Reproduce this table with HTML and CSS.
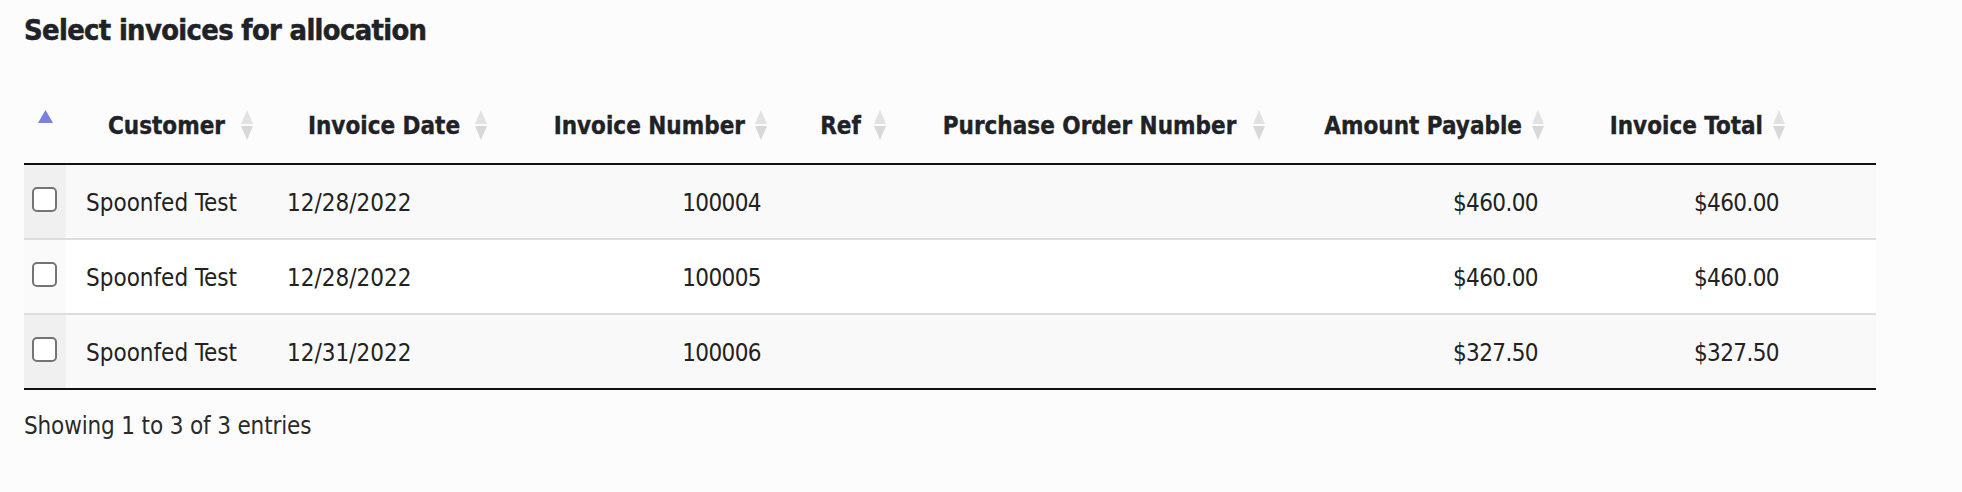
FILE: index.html
```html
<!DOCTYPE html>
<html lang="en">
<head>
  <meta charset="UTF-8">
  <meta name="viewport" content="width=device-width, initial-scale=1.0">
  <title>Select invoices for allocation</title>
  <link rel="stylesheet" href="styles.css">
</head>
<body>
  <div class="page">
    <h1 class="title">Select invoices for allocation</h1>

    <table class="invoices">
      <colgroup>
        <col class="w-check">
        <col class="w-customer">
        <col class="w-date">
        <col class="w-number">
        <col class="w-ref">
        <col class="w-po">
        <col class="w-payable">
        <col class="w-total">
        <col class="w-blank">
      </colgroup>
      <thead>
        <tr>
          <th class="col-check">
            <svg class="sort-asc" width="15" height="13" viewBox="0 0 15 13"><path d="M7.5 0L15 13H0z" fill="#7b80dc"/></svg>
          </th>
          <th>
            <div class="th-inner"><span class="label">Customer</span><span class="sort"><svg width="12" height="30" viewBox="0 0 12 30"><path d="M6 0L12 14H0z" fill="#e2e2e2"/><path d="M0 16H12L6 30z" fill="#d8d8d8"/></svg></span></div>
          </th>
          <th>
            <div class="th-inner"><span class="label">Invoice Date</span><span class="sort"><svg width="12" height="30" viewBox="0 0 12 30"><path d="M6 0L12 14H0z" fill="#e2e2e2"/><path d="M0 16H12L6 30z" fill="#d8d8d8"/></svg></span></div>
          </th>
          <th>
            <div class="th-inner"><span class="label right">Invoice Number</span><span class="sort"><svg width="12" height="30" viewBox="0 0 12 30"><path d="M6 0L12 14H0z" fill="#e2e2e2"/><path d="M0 16H12L6 30z" fill="#d8d8d8"/></svg></span></div>
          </th>
          <th>
            <div class="th-inner"><span class="label">Ref</span><span class="sort"><svg width="12" height="30" viewBox="0 0 12 30"><path d="M6 0L12 14H0z" fill="#e2e2e2"/><path d="M0 16H12L6 30z" fill="#d8d8d8"/></svg></span></div>
          </th>
          <th>
            <div class="th-inner"><span class="label">Purchase Order Number</span><span class="sort"><svg width="12" height="30" viewBox="0 0 12 30"><path d="M6 0L12 14H0z" fill="#e2e2e2"/><path d="M0 16H12L6 30z" fill="#d8d8d8"/></svg></span></div>
          </th>
          <th>
            <div class="th-inner"><span class="label right">Amount Payable</span><span class="sort"><svg width="12" height="30" viewBox="0 0 12 30"><path d="M6 0L12 14H0z" fill="#e2e2e2"/><path d="M0 16H12L6 30z" fill="#d8d8d8"/></svg></span></div>
          </th>
          <th>
            <div class="th-inner"><span class="label right">Invoice Total</span><span class="sort"><svg width="12" height="30" viewBox="0 0 12 30"><path d="M6 0L12 14H0z" fill="#e2e2e2"/><path d="M0 16H12L6 30z" fill="#d8d8d8"/></svg></span></div>
          </th>
          <th class="col-blank"></th>
        </tr>
      </thead>
      <tbody>
        <tr>
          <td class="col-check"><input type="checkbox"></td>
          <td>Spoonfed Test</td>
          <td>12/28/2022</td>
          <td class="num">100004</td>
          <td></td>
          <td></td>
          <td class="num">$460.00</td>
          <td class="num">$460.00</td>
          <td></td>
        </tr>
        <tr>
          <td class="col-check"><input type="checkbox"></td>
          <td>Spoonfed Test</td>
          <td>12/28/2022</td>
          <td class="num">100005</td>
          <td></td>
          <td></td>
          <td class="num">$460.00</td>
          <td class="num">$460.00</td>
          <td></td>
        </tr>
        <tr>
          <td class="col-check"><input type="checkbox"></td>
          <td>Spoonfed Test</td>
          <td>12/31/2022</td>
          <td class="num">100006</td>
          <td></td>
          <td></td>
          <td class="num">$327.50</td>
          <td class="num">$327.50</td>
          <td></td>
        </tr>
      </tbody>
    </table>

    <div class="info">Showing 1 to 3 of 3 entries</div>
  </div>
</body>
</html>
```

FILE: styles.css
```css
body {
  margin: 0;
  background-color: #fcfcfc;
  color: #222;
  font-family: "DejaVu Sans Condensed", "DejaVu Sans", sans-serif;
  font-stretch: semi-condensed;
  font-size: 24px;
  line-height: 30px;
}
.page {
  padding: 13px 24px;
}
.title {
  margin: 0 0 47px;
  font-size: 28.8px;
  line-height: 34px;
  font-weight: bold;
  letter-spacing: -0.65px;
  color: #1f2226;
  -webkit-text-stroke: 0.5px #1f2226;
}

/* table */
.invoices {
  width: 1852px;
  table-layout: fixed;
  border-collapse: separate;
  border-spacing: 0;
}
.w-check { width: 42px; }
.w-customer { width: 201px; }
.w-date { width: 234px; }
.w-number { width: 280px; }
.w-ref { width: 119px; }
.w-po { width: 379px; }
.w-payable { width: 279px; }
.w-total { width: 241px; }
.w-blank { width: 77px; }

.invoices th {
  padding: 17px 0 22px 36px;
  border-bottom: 2px solid #111;
  font-weight: bold;
  white-space: nowrap;
  vertical-align: top;
  color: #1f2226;
  -webkit-text-stroke: 0.35px #1f2226;
}
.invoices th.col-check,
.invoices th.col-blank {
  padding-left: 0;
}
.th-inner {
  display: flex;
  align-items: flex-start;
}
.label {
  flex: 1;
  text-align: center;
}
.label.right {
  text-align: right;
}
.sort {
  width: 36px;
  flex-shrink: 0;
}
.sort svg {
  display: block;
  margin: -1px 0 0 10px;
}
.sort-asc {
  display: block;
  margin: -1px auto 0;
}

.invoices td {
  padding: 23px 20px 20px;
  vertical-align: top;
  white-space: nowrap;
}
.invoices tbody tr:nth-child(odd) td { background-color: #f9f9f9; }
.invoices tbody tr:nth-child(even) td { background-color: #fff; }
.invoices tbody tr:nth-child(odd) td.col-check { background-color: #f0f0f0; }
.invoices tbody tr:nth-child(even) td.col-check { background-color: #fafafa; }
.invoices tbody tr + tr td {
  border-top: 2px solid #ddd;
}
.invoices tbody tr:last-child td {
  border-bottom: 2px solid #111;
}
.invoices td.num {
  text-align: right;
  letter-spacing: -0.6px;
}
.invoices td.col-check {
  padding: 22px 0 21px;
}
.invoices input[type="checkbox"] {
  appearance: none;
  -webkit-appearance: none;
  box-sizing: border-box;
  display: block;
  width: 25px;
  height: 25px;
  margin: 0 0 0 8px;
  border: 2px solid #747474;
  border-radius: 5px;
  background: #fff;
}

.info {
  margin-top: 21px;
  color: #2a2a2a;
  letter-spacing: -0.15px;
}
```
